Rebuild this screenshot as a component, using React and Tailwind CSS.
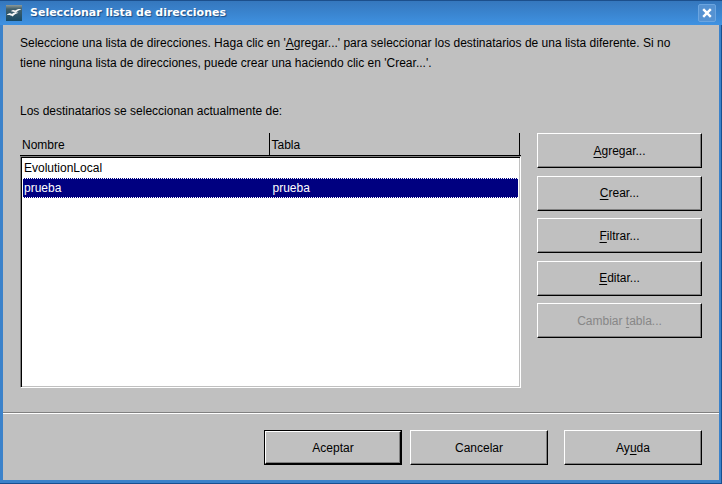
import { useState } from "react";

const rows = [
  { nombre: "EvolutionLocal", tabla: "" },
  { nombre: "prueba", tabla: "prueba" },
];

const raised =
  "border border-t-white border-l-white border-r-black border-b-black shadow-[inset_-1px_-1px_0_#808080]";

const Button = ({ children, className = "", disabled = false }) => (
  <button
    type="button"
    disabled={disabled}
    className={`h-[35px] bg-[#c0c0c0] text-center ${raised} disabled:text-[#878787] ${className}`}
  >
    {children}
  </button>
);

// Underlined keyboard shortcut letter
const Key = ({ children }) => (
  <span className="underline underline-offset-2">{children}</span>
);

const AppIcon = () => (
  <svg viewBox="0 0 16 16" className="h-4 w-4" aria-hidden="true">
    <defs>
      <linearGradient id="sky" x1="0" y1="0" x2="0" y2="1">
        <stop offset="0" stopColor="#8f9a98" />
        <stop offset="0.25" stopColor="#42606c" />
        <stop offset="1" stopColor="#174a66" />
      </linearGradient>
    </defs>
    <rect width="16" height="16" fill="url(#sky)" />
    <path d="M5 6.200C7 4.500 8 5 9.200 5.600C10.500 4.200 13 3.600 15.500 4.200C12.800 5 11.200 6.200 9.800 8C8.200 6.800 6.500 6.400 5 6.200Z" fill="#f4f6f6" />
    <path d="M0.500 10.200C2.500 8 4.500 8 6 8.900C7.500 7.500 10 7.200 12.500 7.800C9.800 8.600 8.200 9.800 6.700 11.600C5 10.200 3 9.800 0.500 10.200Z" fill="#f4f6f6" />
  </svg>
);

const TitleBar = () => (
  <header className="flex h-[25px] items-center justify-between border-t border-[#1c4f8c] bg-linear-to-b from-[#3577bd] to-[#3f92e2] px-1.5">
    <div className="flex items-center gap-2">
      <AppIcon />
      <h1 className="font-['DejaVu_Sans',sans-serif] text-[11px] font-bold text-white [text-shadow:1px_1px_1px_#1b4a80]">
        Seleccionar lista de direcciones
      </h1>
    </div>
    <button
      type="button"
      aria-label="Cerrar"
      className="flex h-[18px] w-[18px] items-center justify-center rounded-xs border border-[#6ba5e0] bg-[#5592d2]"
    >
      <svg viewBox="0 0 10 10" className="h-[10px] w-[10px]" aria-hidden="true">
        <path d="M1.200 1.200L8.800 8.800M8.800 1.200L1.200 8.800" stroke="#fff" strokeWidth="2.400" />
      </svg>
    </button>
  </header>
);

const AddressTable = () => {
  const [selected, setSelected] = useState(1);

  return (
    <table className="flex min-w-0 flex-1 flex-col text-left">
      <thead className="block border-b border-black">
        <tr className="mr-px grid h-[22px] grid-cols-2 border-r border-black">
          <th className="border-r border-black pl-0.5 leading-6 font-normal">Nombre</th>
          <th className="pl-0.5 leading-6 font-normal">Tabla</th>
        </tr>
      </thead>
      <tbody className="block h-[232px] border border-t-[#808080] border-r-white border-b-white border-l-[#808080] bg-white p-px shadow-[inset_1px_1px_0_#000,inset_-1px_-1px_0_#c0c0c0]">
        {rows.map((row, i) => (
          <tr
            key={row.nombre}
            onClick={() => setSelected(i)}
            className={`mx-px grid h-5 grid-cols-2 border-y border-dotted leading-[18px] ${
              i === selected ? "border-white bg-[#000080] text-white" : "border-transparent"
            }`}
          >
            <td className="pl-px">{row.nombre}</td>
            <td className="pl-0.5">{row.tabla}</td>
          </tr>
        ))}
      </tbody>
    </table>
  );
};

const App = () => {
  return (
    <div className="flex min-h-screen flex-col bg-[#3b82ca] font-['Liberation_Sans',sans-serif] text-[12px] text-black">
      <TitleBar />
      <div className="flex flex-1 flex-col border-r border-b border-[#174f90] pr-0.5 pb-[3px] pl-[3px]">
        <main className="flex flex-1 flex-col bg-[#c0c0c0]">
          <section className="px-[17px] pt-2 leading-5">
            <p className="pr-4">
              Seleccione una lista de direcciones. Haga clic en '<Key>A</Key>gregar...' para seleccionar los
              destinatarios de una lista diferente. Si no tiene ninguna lista de direcciones, puede crear una
              haciendo clic en 'Crear...'.
            </p>
            <p className="mt-7">Los destinatarios se seleccionan actualmente de:</p>
            <div className="mt-3 flex items-start gap-4">
              <AddressTable />
              <div className="flex h-[205px] w-[165px] flex-col justify-between">
                <Button><Key>A</Key>gregar...</Button>
                <Button><Key>C</Key>rear...</Button>
                <Button><Key>F</Key>iltrar...</Button>
                <Button><Key>E</Key>ditar...</Button>
                <Button disabled>Cambiar <Key>t</Key>abla...</Button>
              </div>
            </div>
          </section>

          <footer className="mt-6 flex justify-end border-t border-[#808080] px-[17px] pt-[17px] shadow-[inset_0_1px_0_#fff]">
            <div className="mr-2 flex border border-black">
              <Button className="h-[33px]! w-[136px]">Aceptar</Button>
            </div>
            <Button className="mr-4 w-[138px]">Cancelar</Button>
            <Button className="w-[138px]">Ay<Key>u</Key>da</Button>
          </footer>
        </main>
      </div>
    </div>
  );
};

export default App;
